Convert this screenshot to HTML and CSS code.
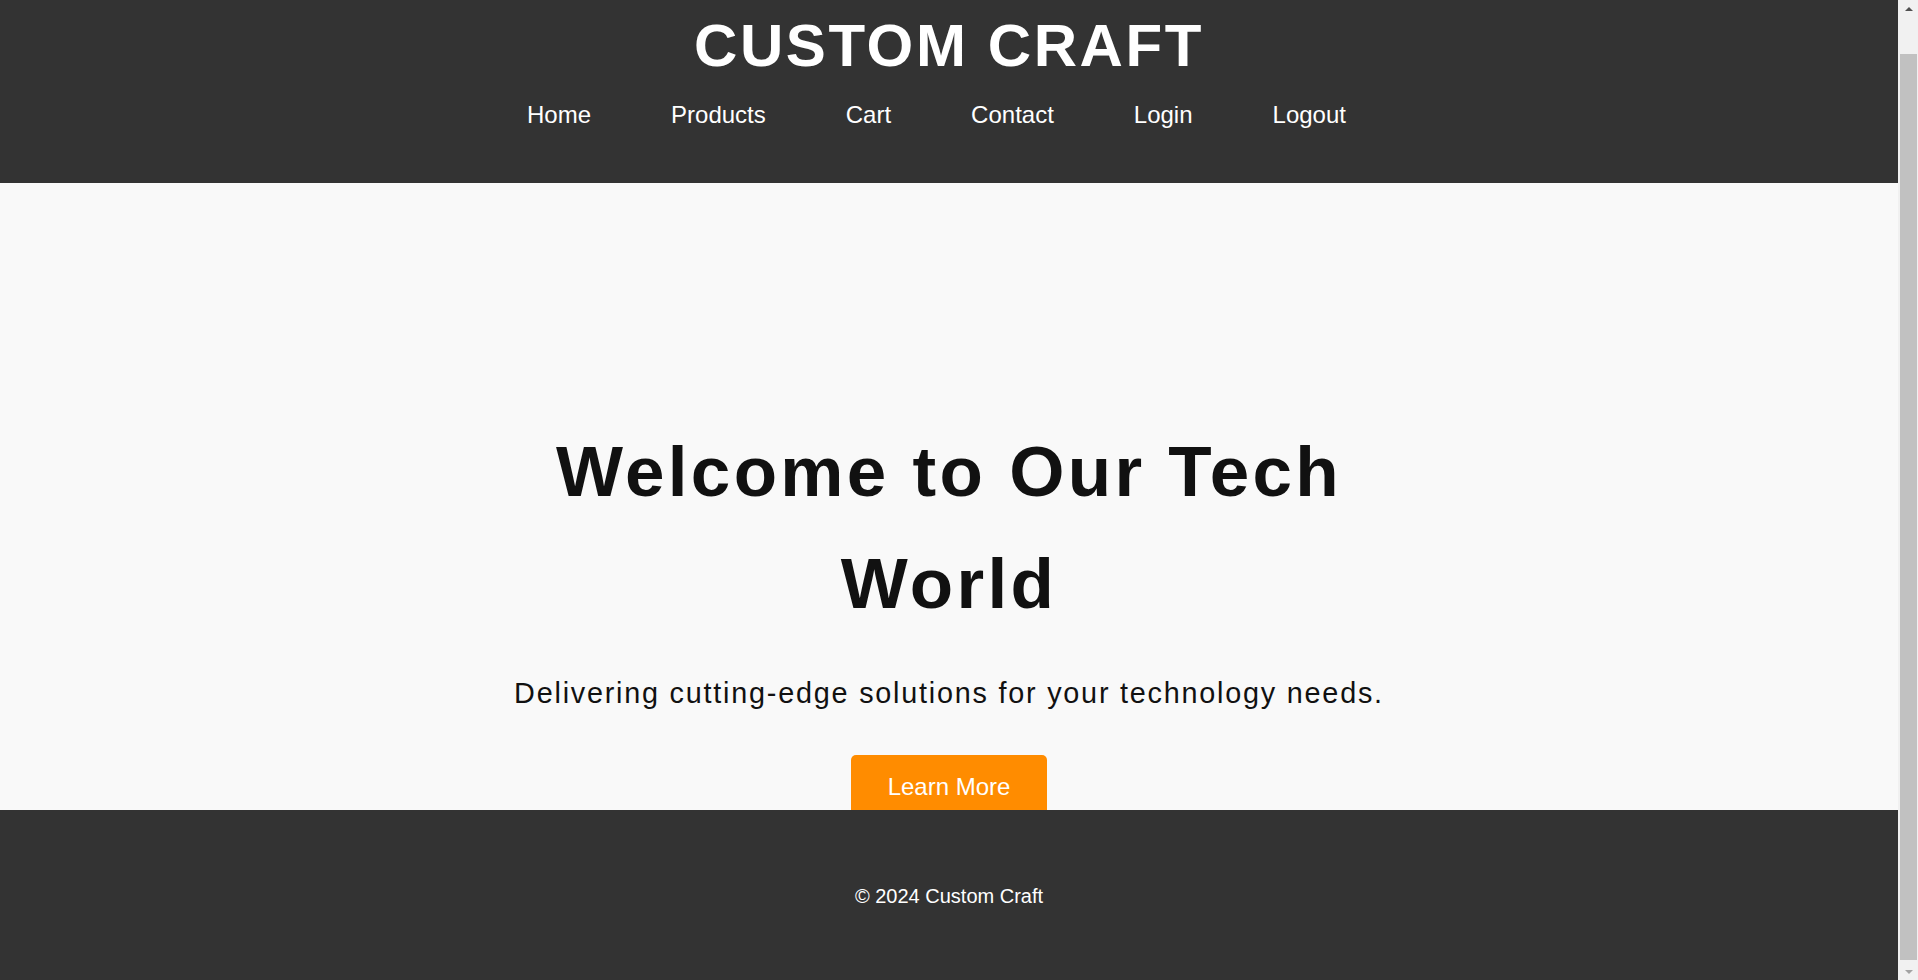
FILE: index.html
```html
<!DOCTYPE html>
<html lang="en">
<head>
<meta charset="utf-8">
<title>Custom Craft</title>
<link rel="stylesheet" href="styles.css">
</head>
<body>
<header class="site-header">
  <h1 class="brand">CUSTOM CRAFT</h1>
  <nav class="main-nav">
    <a href="#">Home</a>
    <a href="#">Products</a>
    <a href="#">Cart</a>
    <a href="#">Contact</a>
    <a href="#">Login</a>
    <a href="#">Logout</a>
  </nav>
</header>
<main class="hero">
  <h2 class="hero-title">Welcome to Our Tech World</h2>
  <p class="hero-text">Delivering cutting-edge solutions for your technology needs.</p>
  <a class="hero-btn" href="#">Learn More</a>
</main>
<footer class="site-footer">
  <p class="copy">&copy; 2024 Custom Craft</p>
</footer>
<div class="scrollbar" aria-hidden="true">
  <div class="sb-btn"><span class="arrow-up"></span></div>
  <div class="sb-track"><div class="sb-thumb"></div></div>
  <div class="sb-btn"><span class="arrow-down"></span></div>
</div>
<script src="script.js"></script>
</body>
</html>
```

FILE: styles.css
```css
html, body {
  margin: 0;
  padding: 0;
}

body {
  font-family: "Liberation Sans", Arial, sans-serif;
  background: #f9f9f9;
  color: #111;
  margin-right: 20px;
}

/* browser-like scrollbar strip */
.scrollbar {
  position: fixed;
  top: 0;
  right: 0;
  width: 20px;
  height: 100vh;
  background: #f1f1f1;
  display: flex;
  flex-direction: column;
}
.sb-btn {
  height: 17px;
  display: flex;
  align-items: center;
  justify-content: center;
  padding-left: 1px;
}
.arrow-up {
  width: 0;
  height: 0;
  border-left: 4px solid transparent;
  border-right: 4px solid transparent;
  border-bottom: 4px solid #505050;
}
.arrow-down {
  width: 0;
  height: 0;
  border-left: 4px solid transparent;
  border-right: 4px solid transparent;
  border-top: 4px solid #a3a3a3;
}
.sb-track {
  flex: 1;
  padding: 37px 1px 3px 2px;
  display: flex;
}
.sb-thumb {
  flex: 1;
  background: #c1c1c1;
}

.site-header {
  background: #333;
  color: #fff;
  padding: 53px 0 54px;
  display: flex;
  flex-direction: column;
  align-items: center;
}

.brand {
  margin: 0;
  font-size: 60px;
  line-height: 69px;
  font-weight: 700;
  letter-spacing: 2.6px;
}

.main-nav {
  margin-top: 21px;
  display: flex;
  justify-content: center;
  gap: 80px;
  padding-right: 25px;
}

.main-nav a {
  color: #fff;
  text-decoration: none;
  font-size: 24px;
  line-height: 28px;
}

.hero {
  height: 627px;
  box-sizing: border-box;
  overflow: hidden;
  padding-top: 233px;
  display: flex;
  flex-direction: column;
  align-items: center;
  text-align: center;
  background: #f9f9f9;
}

.hero-title {
  margin: 0;
  max-width: 900px;
  font-size: 71px;
  line-height: 112px;
  font-weight: 700;
  letter-spacing: 3.3px;
  color: #111;
}

.hero-text {
  margin: 37px 0 0;
  font-size: 28.8px;
  line-height: 33px;
  letter-spacing: 1.77px;
  color: #111;
}

.hero-btn {
  margin-top: 45px;
  display: inline-block;
  padding: 18px 37px;
  background: #ff8c00;
  color: #fff;
  font-size: 24px;
  line-height: 28px;
  border-radius: 5px;
  text-decoration: none;
  flex-shrink: 0;
}

.site-footer {
  background: #333;
  color: #fff;
  text-align: center;
  padding: 75px 0 72px;
}

.copy {
  margin: 0;
  font-size: 20px;
  line-height: 23px;
}
```

FILE: script.js
```js
window.scrollTo(0, document.documentElement.scrollHeight);
```
